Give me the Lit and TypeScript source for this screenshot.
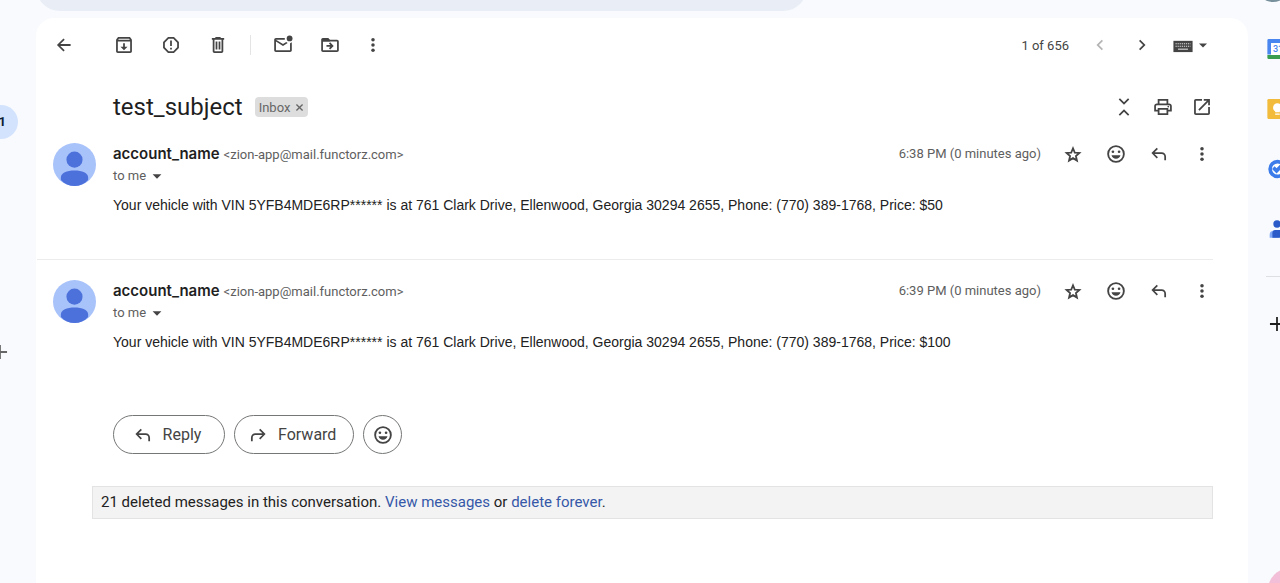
import { LitElement, html, css, svg, TemplateResult } from "lit";
import { customElement, property } from "lit/decorators.js";

const glyphs: Record<string, TemplateResult> = {
  back: svg`<path d="M19.500 11H7.800l5-5L11.400 4.600 4 12l7.400 7.400 1.400-1.400-5-5h11.700z"/>`,
  archive: svg`<path d="M20.500 5.200 19.200 3.500C18.900 3.200 18.500 3 18 3H6c-.5 0-.9.2-1.200.5L3.500 5.200C3.200 5.600 3 6 3 6.500V19c0 1.100.9 2 2 2h14c1.100 0 2-.9 2-2V6.500c0-.5-.2-.9-.5-1.300zM6.200 5h11.600l.8 1H5.400zM5 19V8h14v11zm8-9h-2v4H8l4 4 4-4h-3z"/>`,
  spam: svg`<path d="M8.600 3h6.800L21 8.600v6.800L15.400 21H8.600L3 15.400V8.600zM9.400 5 5 9.400v5.200L9.400 19h5.200l4.400-4.400V9.400L14.600 5zM11 7h2v6h-2zm0 8h2v2h-2z"/>`,
  trash: svg`<path d="M15 4V3H9v1H5v2h1v13c0 1.100.9 2 2 2h8c1.100 0 2-.9 2-2V6h1V4zm1 15H8V6h8zM9.300 8h2v9h-2zm3.400 0h2v9h-2z"/>`,
  unread: svg`<path d="M22 8.900V18c0 1.100-.9 2-2 2H4c-1.100 0-2-.9-2-2V6c0-1.100.9-2 2-2h10.100a5 5 0 0 0 0 2H4l8 5 3.700-2.300c.5.400 1 .7 1.600 1L12 13 4 8v10h16V9.900c.7-.1 1.400-.5 2-1z"/><circle cx="19.500" cy="4.500" r="3.300"/>`,
  move: svg`<path d="M20 6h-8l-2-2H4c-1.100 0-2 .9-2 2v12c0 1.100.9 2 2 2h16c1.100 0 2-.9 2-2V8c0-1.100-.9-2-2-2zm0 12H4V8h16zm-7.800-1 4-4-4-4-1.400 1.400 1.600 1.600H8v2h4.400l-1.600 1.600z"/><path d="M3 5h7l2 3H3z"/>`,
  more: svg`<circle cx="12" cy="6" r="2"/><circle cx="12" cy="12" r="2"/><circle cx="12" cy="18" r="2"/>`,
  prev: svg`<path d="M15.400 7.400 14 6l-6 6 6 6 1.400-1.400-4.600-4.600z"/>`,
  next: svg`<path d="M10 6 8.600 7.400l4.600 4.600-4.600 4.600L10 18l6-6z"/>`,
  collapse: svg`<path d="M6 3.400 7.400 2 12 6.600 16.600 2 18 3.400l-6 6zM6 20.600 7.400 22l4.600-4.600 4.600 4.600 1.400-1.400-6-6z"/>`,
  print: svg`<path d="M19 8h-1V3H6v5H5c-1.700 0-3 1.300-3 3v6h4v4h12v-4h4v-6c0-1.700-1.300-3-3-3zM8 5h8v3H8zm8 14H8v-4h8zm2-4v-2H6v2H4v-4c0-.6.4-1 1-1h14c.6 0 1 .4 1 1v4z"/><circle cx="18" cy="11.500" r="1"/>`,
  open: svg`<path d="M19 19H5V5h7V3H5c-1.100 0-2 .9-2 2v14c0 1.100.9 2 2 2h14c1.100 0 2-.9 2-2v-7h-2zM14 3v2h3.600l-9.800 9.800 1.400 1.400L19 6.400V10h2V3z"/>`,
  star: svg`<path d="m12 5.500 2 4.900 5.300.4-4 3.500 1.200 5.200-4.500-2.800-4.500 2.800 1.200-5.200-4-3.500 5.300-.4z" fill="none" stroke="currentColor" stroke-width="2"/>`,
  smile: svg`<path fill-rule="evenodd" d="M12 2a10 10 0 1 0 0 20 10 10 0 0 0 0-20zm0 2.100a7.900 7.900 0 1 1 0 15.800 7.900 7.900 0 0 1 0-15.800z"/><circle cx="8.500" cy="9.500" r="1.500"/><circle cx="15.500" cy="9.500" r="1.500"/><path d="M6.900 13.500h10.200a5.300 5.300 0 0 1-10.200 0z"/>`,
  reply: svg`<path d="M9.400 5 10.800 6.400 7 10h8a5 5 0 0 1 5 5v4h-2v-4a3 3 0 0 0-3-3H7l3.800 3.600L9.400 17l-6-6z"/>`,
  forward: svg`<path d="M14.600 5 13.200 6.400 17 10H9a5 5 0 0 0-5 5v4h2v-4a3 3 0 0 1 3-3h8l-3.800 3.600 1.400 1.400 6-6z"/>`,
  caret: svg`<path d="m7 10 5 5 5-5z"/>`,
  close: svg`<path d="m5 5 14 14M19 5 5 19" fill="none" stroke="currentColor" stroke-width="3"/>`,
  plus: svg`<path d="M11 4h2v7h7v2h-7v7h-2v-7H4v-2h7z"/>`,
  keyboard: svg`<path d="M.5 7h23v13.500H.5z"/><path d="M3 10.500h18M3 13.500h18" stroke="#ddd" stroke-width="1.300" stroke-dasharray="1.500 1"/><path d="M6 17h12" stroke="#ddd" stroke-width="1.300"/>`,
  person: svg`<circle cx="12" cy="12" r="12" fill="#a8c2fa"/><circle cx="12" cy="9.300" r="4.500" fill="#4c71db"/><path fill="#4c71db" d="M4.400 20.600v-1.400c0-2.300 3.300-3.800 7.600-3.800s7.600 1.500 7.600 3.800v1.400C17.600 22.900 15 24 12 24s-5.600-1.100-7.600-3.400z"/>`,
  calendar: svg`<path fill="#4a86f0" d="M1.500 2.500a1.500 1.500 0 0 1 1.500-1.500h15v4.500H5.500V18h-4z"/><path fill="#3a9d50" d="M1.500 18.500H18V23H3a1.500 1.500 0 0 1-1.500-1.500z"/><path fill="#fff" d="M5.500 5.500h13v13h-13z"/><path fill="#f9bc15" d="M18.500 5.500h4v13h-4z"/>`,
  keep: svg`<rect x="1.500" y="1" width="22" height="22" rx="1.500" fill="#f3bb3b"/><circle cx="12.500" cy="10.500" r="4.800" fill="#fff"/><path fill="#fff" d="M10 13h5v2.500h-5zM10 16.800h5v1.600h-5z"/>`,
  tasks: svg`<circle cx="12.500" cy="12" r="8" fill="#fff" stroke="#3b7bea" stroke-width="4"/><path d="m8 10.500 3.500 3.500 7-7" fill="none" stroke="#3b7bea" stroke-width="4"/>`,
  contacts: svg`<path fill="#7da7f5" d="M4 21.500v-3c0-3 2-5 5-5h5v8z"/><circle cx="12" cy="6.500" r="4" fill="#2a5bc8"/><path fill="#2a5bc8" d="M7 21.500v-5c0-2 1-3.500 3-3.500h14v8.500z"/>`,
};

const fullBleed = new Set(["person", "keyboard", "calendar", "keep", "tasks", "contacts"]);

@customElement("mail-icon")
class MailIcon extends LitElement {
  @property() name = "";
  static styles = css`
    :host { display: block; flex: none; width: 22px; height: 22px; }
    svg { display: block; width: 100%; height: 100%; fill: currentColor; }
  `;
  render() {
    const box = fullBleed.has(this.name) ? "0 0 24 24" : "-0.5 -0.5 25 25";
    return html`<svg viewBox=${box} aria-hidden="true">${glyphs[this.name]}</svg>`;
  }
}

const shared = css`
  * { box-sizing: border-box; }
  button { appearance: none; border: 0; padding: 0; margin: 0; background: none; color: inherit; font: inherit; cursor: pointer; display: flex; align-items: center; flex: none; }
  button:disabled { color: #b4b4b4; cursor: default; }
  .spacer { flex: 1; }
`;

const iconButton = (name: string, label: string, disabled = false) => html`
  <button type="button" aria-label=${label} ?disabled=${disabled}><mail-icon name=${name}></mail-icon></button>`;

@customElement("mail-message")
class MailMessage extends LitElement {
  @property() time = "";
  @property() price = "";
  static styles = [shared, css`
    :host { display: block; }
    .message { display: grid; grid-template-columns: 43px minmax(0, 1fr); column-gap: 17px; }
    .avatar { width: 43px; height: 43px; margin-top: 1px; }
    .top { display: flex; align-items: center; gap: 21px; height: 24px; color: #444; }
    .sender { display: flex; align-items: baseline; gap: 4px; flex: 1; min-width: 0; white-space: nowrap; }
    .name { font: 600 15px/24px Inter, sans-serif; color: #1f1f1f; }
    .email, .time, .to { font-size: 13px; line-height: 20px; color: #5e5e5e; white-space: nowrap; }
    .to { height: 20px; }
    .caret { color: #444; }
    .text { margin: 8px 0 0; font: 14px/22px "Liberation Sans", Arial, sans-serif; color: #222; }
  `];
  render() {
    return html`
      <article class="message">
        <mail-icon class="avatar" name="person"></mail-icon>
        <div>
          <div class="top">
            <div class="sender"><span class="name">account_name</span><span class="email">&lt;zion-app@mail.functorz.com&gt;</span></div>
            <span class="time">${this.time} (0 minutes ago)</span>
            ${iconButton("star", "Star")}${iconButton("smile", "Add reaction")}${iconButton("reply", "Reply")}${iconButton("more", "More")}
          </div>
          <button class="to" type="button">to me <mail-icon class="caret" name="caret"></mail-icon></button>
          <p class="text">Your vehicle with VIN 5YFB4MDE6RP****** is at 761 Clark Drive, Ellenwood, Georgia 30294 2655, Phone: (770) 389-1768, Price: ${this.price}</p>
        </div>
      </article>`;
  }
}

@customElement("app-root")
class AppRoot extends LitElement {
  static styles = [shared, css`
    :host { display: block; font-family: Roboto, sans-serif; color: #444; }
    .page { display: grid; grid-template: 18px minmax(0, 1fr) / 36px minmax(0, 1fr) 32px; height: 100vh; overflow: hidden; background: #f8fafd; }
    .header { grid-column: 1 / -1; display: flex; justify-content: space-between; align-items: flex-start; padding-left: 36px; }
    .search { width: 62%; height: 48px; margin-top: -37px; border-radius: 24px; background: #e9eef6; }
    .account { width: 34px; height: 34px; margin: -32px -10px 0 0; border-radius: 50%; background: #78909c; }
    .left { display: flex; flex-direction: column; align-items: flex-start; padding-top: 87px; overflow: hidden; }
    .count { width: 18px; height: 34px; padding-right: 12px; justify-content: flex-end; border-radius: 0 17px 17px 0; background: #d3e3fd; color: #0b1d35; font: 700 13px/34px Roboto, sans-serif; }
    .add { margin: 202px 0 0 -11px; color: #666; }
    .main { background: #fff; border-radius: 18px 18px 0 0; padding-right: 35px; }
    .toolbar { display: flex; align-items: center; height: 54px; padding-left: 17px; }
    .group { display: flex; align-items: center; gap: 25px; }
    .leading { margin-left: 38px; }
    .divider { width: 1px; height: 20px; margin: 0 21px; background: #e4e4e4; }
    .last { margin-left: 21px; }
    .pager { display: flex; align-items: center; gap: 20px; font-size: 13px; }
    .input-tool mail-icon { width: 20px; height: 20px; }
    .subject { display: flex; align-items: center; gap: 17px; height: 36px; margin-top: 17px; padding-left: 77px; }
    .title { display: flex; align-items: center; gap: 12px; flex: 1; }
    h1 { margin: 0; font: 400 24px/36px Roboto, sans-serif; color: #1f1f1f; }
    .chip { height: 20px; gap: 4px; padding: 0 3px 0 4px; border-radius: 4px; background: #ddd; color: #666; font-size: 13px; }
    .chip mail-icon { width: 11px; height: 11px; }
    .thread { padding: 17px 0 0 17px; }
    .rule { height: 1px; margin: 43px 0 19px -16px; background: #ececec; }
    .actions { display: flex; gap: 9px; margin: 62px 0 0 60px; }
    .pill { height: 39px; min-width: 112px; gap: 9px; padding: 0 17px 0 12px; justify-content: center; border: 1px solid #747775; border-radius: 20px; font-size: 16px; }
    .round { min-width: 0; width: 39px; padding: 0; }
    .notice { margin: 32px 0 0 56px; padding: 0 8px; border: 1px solid #e3e3e3; background: #f3f3f3; color: #222; font-size: 15px; line-height: 31px; }
    .notice a { color: #3558a8; text-decoration: none; }
    .right { display: flex; flex-direction: column; align-items: flex-start; padding: 20px 0 0 18px; overflow: hidden; }
    .apps { display: flex; flex-direction: column; gap: 38px; }
    .cal { display: grid; }
    .cal > * { grid-area: 1 / 1; }
    .cal span { z-index: 1; padding-left: 7px; font: 500 9px/22px Roboto, sans-serif; color: #4a86f0; justify-self: start; }
    .side-rule { width: 16px; height: 1px; margin: 36px 0; background: #dcdfe4; }
    .plus { color: #1f1f1f; }
    .help { width: 44px; height: 44px; margin: auto 0 -29px 2px; border-radius: 50%; background: #f3bfd8; flex: none; }
  `];
  render() {
    return html`
      <div class="page">
        <header class="header"><div class="search"></div><div class="account"></div></header>
        <nav class="left">
          <button class="count" type="button">1</button>
          <button class="add" type="button" aria-label="Create label"><mail-icon name="plus"></mail-icon></button>
        </nav>
        <main class="main">
          <div class="toolbar">
            ${iconButton("back", "Back to inbox")}
            <div class="group leading">${iconButton("archive", "Archive")}${iconButton("spam", "Report spam")}${iconButton("trash", "Delete")}</div>
            <div class="divider"></div>
            <div class="group">${iconButton("unread", "Mark as unread")}${iconButton("move", "Move to")}</div>
            <div class="last">${iconButton("more", "More")}</div>
            <div class="spacer"></div>
            <div class="pager">
              <span>1 of 656</span>
              ${iconButton("prev", "Newer", true)}${iconButton("next", "Older")}
              <button class="input-tool" type="button" aria-label="Input tools"><mail-icon name="keyboard"></mail-icon><mail-icon name="caret"></mail-icon></button>
            </div>
          </div>
          <div class="subject">
            <div class="title"><h1>test_subject</h1><button class="chip" type="button">Inbox <mail-icon name="close"></mail-icon></button></div>
            ${iconButton("collapse", "Collapse all")}${iconButton("print", "Print all")}${iconButton("open", "Open in new window")}
          </div>
          <section class="thread">
            <mail-message time="6:38 PM" price="$50"></mail-message>
            <div class="rule"></div>
            <mail-message time="6:39 PM" price="$100"></mail-message>
            <div class="actions">
              <button class="pill" type="button"><mail-icon name="reply"></mail-icon>Reply</button>
              <button class="pill" type="button"><mail-icon name="forward"></mail-icon>Forward</button>
              <button class="pill round" type="button" aria-label="Add reaction"><mail-icon name="smile"></mail-icon></button>
            </div>
          </section>
          <div class="notice">21 deleted messages in this conversation. <a href="#view">View messages</a> or <a href="#delete">delete forever</a>.</div>
        </main>
        <aside class="right">
          <div class="apps">
            <button class="cal" type="button" aria-label="Calendar"><mail-icon name="calendar"></mail-icon><span>31</span></button>
            ${iconButton("keep", "Keep")}${iconButton("tasks", "Tasks")}${iconButton("contacts", "Contacts")}
          </div>
          <div class="side-rule"></div>
          <button class="plus" type="button" aria-label="Get add-ons"><mail-icon name="plus"></mail-icon></button>
          <div class="help"></div>
        </aside>
      </div>`;
  }
}
